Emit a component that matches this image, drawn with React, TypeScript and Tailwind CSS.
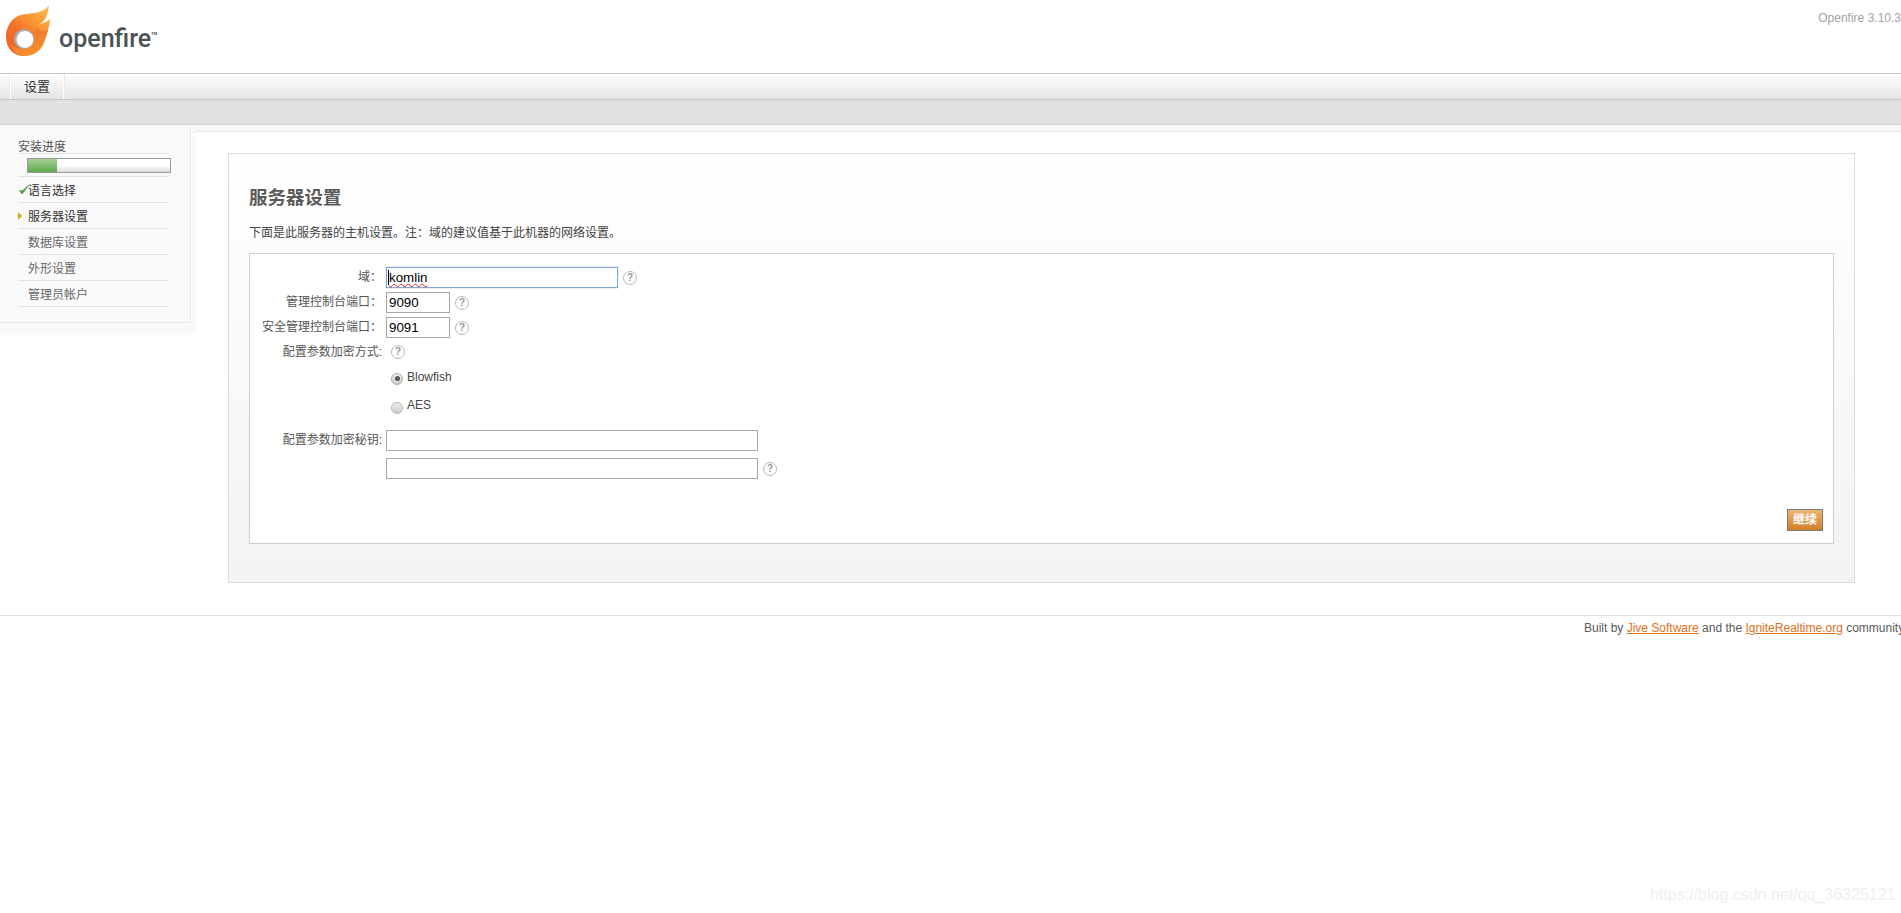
import React from 'react';

const steps = [
    { name: '语言选择', state: 'done' },
    { name: '服务器设置', state: 'active' },
    { name: '数据库设置', state: '' },
    { name: '外形设置', state: '' },
    { name: '管理员帐户', state: '' },
];

function Help() {
    return (
        <span className="flex items-center justify-center w-[14px] h-[14px] rounded-full border-[1.500px] border-[#b8b8b8] text-[10px] leading-none font-bold text-[#9a9a9a] shrink-0">?</span>
    );
}

function Logo() {
    return (
        <div className="flex items-start">
            <svg width="54" height="60" viewBox="0 0 54 60" className="shrink-0">
                <defs>
                    <linearGradient id="flame" x1="46" y1="6" x2="12" y2="46" gradientUnits="userSpaceOnUse">
                        <stop offset="0" stopColor="#fdbb4e" />
                        <stop offset="0.35" stopColor="#f99a33" />
                        <stop offset="0.7" stopColor="#f2702a" />
                        <stop offset="1" stopColor="#ee6a24" />
                    </linearGradient>
                    <linearGradient id="ring" x1="24" y1="24" x2="34" y2="58" gradientUnits="userSpaceOnUse">
                        <stop offset="0" stopColor="#f2702a" />
                        <stop offset="1" stopColor="#f7942f" />
                    </linearGradient>
                </defs>
                <path d="M49 5C47 9 41 12 34 13C28 14 22 14 18 16C10 20 5.500 29 6 38C6.500 49 14 56 24 56C33 56 41 51 44 42C47 35 49 27 50.500 19C47 22 42 23 38 25C43 23 48 18 49 5Z" fill="url(#flame)" />
                <path d="M10 44C13 52 19 56 24 56C33 56 41 51 44 42C46 37 47 33 48 29C44 33 40 30 36 28C33 32 37 42 28 47C22 50 14 48 10 44Z" fill="url(#ring)" />
                <circle cx="24" cy="39" r="10" fill="#a9aaa8" />
                <circle cx="25" cy="39.500" r="8.500" fill="#ffffff" />
            </svg>
            <div className="flex items-start ml-[5px] mt-[23px] font-['Roboto',sans-serif] font-medium text-[25px] leading-[31px] text-[#4b5357]">
                openfire
                <span className="text-[4px] leading-none mt-[9px] font-bold">TM</span>
            </div>
        </div>
    );
}

export default function App() {
    return (
        <div className="relative min-h-[913px] bg-white overflow-hidden font-['Liberation_Sans','Noto_Sans_CJK_SC',sans-serif] text-[12px] text-[#444]">
            <div className="h-[73px] flex justify-between">
                <Logo />
                <div className="pt-[11px] text-[12px] leading-[14px] text-[#a3a3a3] whitespace-nowrap">Openfire 3.10.3</div>
            </div>

            <div className="h-[27px] border-t border-b border-t-[#c8c8c8] border-b-[#c6c6c6] bg-gradient-to-b from-white to-[#e4e4e4] pl-[9px] flex">
                <div className="w-[56px] h-full border-x border-[#e8e8e8] shadow-[inset_1px_0_0_#fff,inset_-1px_0_0_#fff] flex items-center justify-center text-[13px] text-[#333]">设置</div>
            </div>
            <div className="h-[25px] bg-[#e1e1e1] border-b border-[#d4d4d4]"></div>

            <div className="flex items-stretch">
                <div className="w-[192px] shrink-0">
                    <div className="w-[191px] h-[198px] bg-[#f9f9f9] border-r border-b border-[#e6e6e6] pl-[18px] pr-[22px] pt-[15px]">
                        <div className="h-[14px] leading-[14px] border-b border-[#e3e3e3] text-[#555]">安装进度</div>
                        <div className="h-[23px] border-b border-[#e3e3e3] pl-[9px] pt-[4px]">
                            <div className="w-[144px] h-[15px] border border-[#999] bg-gradient-to-b from-white via-white to-[#dcdcdc]">
                                <div className="w-[29px] h-full bg-gradient-to-b from-[#a4cf94] to-[#5cab4a]"></div>
                            </div>
                        </div>
                        {steps.map(step => (
                            <div key={step.name} className="relative h-[26px] border-b border-[#e3e3e3] pl-[10px] pt-[2px] flex items-center">
                                {step.state === 'done' && (
                                    <svg width="10" height="10" viewBox="0 0 10 10" className="absolute left-[1px] top-[8px]">
                                        <path d="M0.500 5.500L3 9L9.500 0.500L3.200 6Z" fill="#4f9c3e" stroke="#4f9c3e" strokeWidth="0.800" />
                                    </svg>
                                )}
                                {step.state === 'active' && (
                                    <span className="absolute left-0 top-[9px] w-0 h-0 border-y-[4px] border-y-transparent border-l-[4px] border-l-[#d9a404]"></span>
                                )}
                                <span className={step.state === 'active' || step.state === 'done' ? 'text-[#333]' : 'text-[#666]'}>{step.name}</span>
                            </div>
                        ))}
                    </div>
                    <div className="h-[12px] bg-[#f9f9f9]"></div>
                </div>

                <div className="flex-1 min-w-0 bg-[#f7f7f7] pt-[6px]">
                    <div className="bg-white border-t border-[#e5e5e5] rounded-tl-[6px] flex">
                        <div className="w-[4px] h-[197px] mt-[5px] bg-[#f9f9f9] shrink-0"></div>
                        <div className="flex-1 ml-[32px] mr-[46px] mt-[21px] mb-[32px] border border-[#dcdcdc] bg-gradient-to-b from-white to-[#f3f3f3] pt-[32px] px-[20px] pb-[38px]">
                            <h1 className="text-[18.500px] leading-[24px] font-bold text-[#5a5a5a]">服务器设置</h1>
                            <p className="mt-[15px] leading-[16px] text-[#444]">下面是此服务器的主机设置。注：域的建议值基于此机器的网络设置。</p>

                            <div className="mt-[12px] border border-[#cfcfcf] bg-white pt-[13px] pr-[10px] pb-[12px] text-[#555]">
                                <div className="flex items-center h-[21px]">
                                    <label className="w-[132px] text-right shrink-0 -mt-[2px]">域：</label>
                                    <div className="relative ml-[4px]">
                                        <input defaultValue="komlin" spellCheck={false} className="block w-[232px] h-[21px] px-[2px] border border-[#7ea6e0] shadow-[0_0_1px_#7ea6e0] outline-none text-[13.330px] text-black" />
                                        <span className="absolute left-[3px] top-[2px] leading-[17px] text-[13.330px] text-transparent underline decoration-wavy decoration-[#e2231a] decoration-1 pointer-events-none">komlin</span>
                                        <span className="absolute left-[2px] top-[3px] w-[1px] h-[15px] bg-black"></span>
                                    </div>
                                    <span className="ml-[5px]"><Help /></span>
                                </div>
                                <div className="flex items-center h-[21px] mt-[4px]">
                                    <label className="w-[132px] text-right shrink-0 -mt-[2px]">管理控制台端口：</label>
                                    <input defaultValue="9090" className="block ml-[4px] w-[64px] h-[21px] px-[2px] border border-[#a6a6a6] outline-none text-[13.330px] text-black" />
                                    <span className="ml-[5px]"><Help /></span>
                                </div>
                                <div className="flex items-center h-[21px] mt-[4px]">
                                    <label className="w-[132px] text-right shrink-0 -mt-[2px]">安全管理控制台端口：</label>
                                    <input defaultValue="9091" className="block ml-[4px] w-[64px] h-[21px] px-[2px] border border-[#a6a6a6] outline-none text-[13.330px] text-black" />
                                    <span className="ml-[5px]"><Help /></span>
                                </div>
                                <div className="flex items-center h-[21px] mt-[3px]">
                                    <label className="w-[132px] text-right shrink-0">配置参数加密方式:</label>
                                    <span className="ml-[9px]"><Help /></span>
                                </div>
                                <div className="flex items-center h-[21px] mt-[5px] pl-[141px]">
                                    <span className="w-[12px] h-[12px] rounded-full border border-[#aaa] bg-gradient-to-b from-[#eee] to-[#ccc] flex items-center justify-center mt-[2px]">
                                        <span className="w-[5px] h-[5px] rounded-full bg-[#555]"></span>
                                    </span>
                                    <span className="ml-[4px] -mt-[2px] font-['Liberation_Sans',sans-serif] text-[#444]">Blowfish</span>
                                </div>
                                <div className="flex items-center h-[21px] mt-[8px] pl-[141px]">
                                    <span className="w-[12px] h-[12px] rounded-full border border-[#b5b5b5] bg-gradient-to-b from-[#eee] to-[#ccc] mt-[2px]"></span>
                                    <span className="ml-[4px] -mt-[3px] font-['Liberation_Sans',sans-serif] text-[#444]">AES</span>
                                </div>
                                <div className="flex items-center h-[21px] mt-[13px]">
                                    <label className="w-[132px] text-right shrink-0 -mt-[2px]">配置参数加密秘钥:</label>
                                    <input type="password" className="block ml-[4px] w-[372px] h-[21px] border border-[#a6a6a6] outline-none" />
                                </div>
                                <div className="flex items-center h-[21px] mt-[7px] pl-[136px]">
                                    <input type="password" className="block w-[372px] h-[21px] border border-[#a6a6a6] outline-none" />
                                    <span className="ml-[5px]"><Help /></span>
                                </div>
                                <div className="flex justify-end mt-[30px]">
                                    <button className="w-[36px] h-[22px] border border-[#7b7b7b] bg-gradient-to-b from-[#eab673] to-[#d27f22] text-white font-bold text-[12px] leading-none">继续</button>
                                </div>
                            </div>
                        </div>
                    </div>
                </div>
            </div>

            <div className="h-[28px] border-t border-[#dedede] pl-[1584px] pt-[4px] flex items-start leading-[16px] whitespace-nowrap text-[#5a5a5a]">
                <span>Built by&nbsp;</span>
                <a className="text-[#e2701c] underline">Jive Software</a>
                <span>&nbsp;and the&nbsp;</span>
                <a className="text-[#e2701c] underline">IgniteRealtime.org</a>
                <span>&nbsp;community</span>
            </div>

            <div className="absolute left-[1650px] top-[885px] text-[16px] leading-[20px] text-[#efefef] whitespace-nowrap font-['Liberation_Sans',sans-serif]">https://blog.csdn.net/qq_36325121</div>
        </div>
    );
}
